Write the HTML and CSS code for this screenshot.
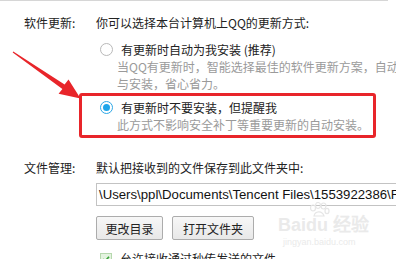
FILE: index.html
```html
<!DOCTYPE html>
<html lang="zh-CN">
<head>
    <meta charset="UTF-8">
    <meta name="viewport" content="width=device-width, initial-scale=1.0">
    <title>更新设置</title>
    <link rel="stylesheet" href="styles.css">
</head>
<body>
    <div class="panel">
        <div class="setting-row">
            <div class="setting-label">软件更新:</div>
            <div class="setting-body">
                <div class="setting-intro">你可以选择本台计算机上QQ的更新方式:</div>

                <div class="option">
                    <div class="option-title">
                        <span class="radio"></span>
                        <span>有更新时自动为我安装 (推荐)</span>
                    </div>
                    <div class="option-desc">当QQ有更新时，智能选择最佳的软件更新方案，自动<br>与安装，省心省力。</div>
                </div>

                <div class="option option-second">
                    <div class="option-title">
                        <span class="radio checked"></span>
                        <span>有更新时不要安装，但提醒我</span>
                    </div>
                    <div class="option-desc">此方式不影响安全补丁等重要更新的自动安装。</div>
                </div>
            </div>
        </div>

        <div class="setting-row files">
            <div class="setting-label">文件管理:</div>
            <div class="setting-body">
                <div class="setting-intro">默认把接收到的文件保存到此文件夹中:</div>
                <div class="path-box">\Users\ppl\Documents\Tencent Files\1553922386\F</div>
                <div class="btn-row">
                    <button class="btn btn-change">更改目录</button>
                    <button class="btn btn-open">打开文件夹</button>
                </div>
                <div class="check-row">
                    <span class="checkbox">
                        <svg width="12" height="12" viewBox="0 0 12 12"><path d="M2.5 6.2 L5 8.6 L9.6 3.2" fill="none" stroke="#3aa23a" stroke-width="2"/></svg>
                    </span>
                    <span>允许接收通过秒传发送的文件</span>
                </div>
            </div>
        </div>
    </div>

    <!-- annotation overlays -->
    <div class="mark-box"></div>
    <svg class="mark-arrow" width="100" height="110" viewBox="0 0 100 110">
        <polygon points="13.3,51.4 64.6,84.4 68.5,79.6 80.5,98.5 58.6,93.8 62.4,89 12.7,52.6" fill="#e8252a"/>
    </svg>
    <div class="watermark">
        <svg class="wm-paw" width="22" height="16" viewBox="0 0 22 16">
            <g fill="none" stroke="#e6e6e6" stroke-width="1.2">
                <ellipse cx="5" cy="6" rx="2.5" ry="3"/>
                <ellipse cx="10" cy="3.5" rx="2.5" ry="3"/>
                <ellipse cx="15.5" cy="4" rx="2.5" ry="3"/>
                <ellipse cx="19" cy="9" rx="2" ry="2.6"/>
                <path d="M6 14 C7 9 14 8 16 14 Z"/>
            </g>
        </svg>
        <div class="wm-logo">Bai<span>du</span> 经验</div>
        <div class="wm-url">jingyan.baidu.com</div>
    </div>
</body>
</html>
```

FILE: styles.css
```css
* {
    margin: 0;
    padding: 0;
    box-sizing: border-box;
}

body {
    font-family: 'Noto Sans CJK SC', 'Noto Sans', sans-serif;
    font-size: 12px;
    line-height: 17px;
    color: #222;
    background: #fff;
    overflow: hidden;
    width: 396px;
    height: 259px;
    position: relative;
}

.panel {
    width: 388px;
    border-top: 1px solid #d6d6d6;
    padding-top: 13px;
}

.setting-row {
    display: flex;
    padding-left: 24px;
}

.setting-label {
    width: 72px;
    flex-shrink: 0;
}

.setting-body {
    flex: 1;
    min-width: 0;
}

.setting-intro {
    white-space: nowrap;
}

.option {
    margin-top: 10px;
}

.option-second {
    margin-top: 7px;
}

.option-title {
    display: flex;
    align-items: center;
    gap: 8px;
    padding-left: 4px;
    white-space: nowrap;
}

.option-desc {
    padding-left: 21px;
    color: #9a9a9a;
    white-space: nowrap;
}

.radio {
    width: 13px;
    height: 13px;
    border: 1px solid #b9b9b9;
    border-radius: 50%;
    background: #fff;
    position: relative;
    flex-shrink: 0;
}

.radio.checked {
    border-color: #2ea7e6;
}

.radio.checked::after {
    content: '';
    position: absolute;
    left: 2px;
    top: 2px;
    width: 7px;
    height: 7px;
    border-radius: 50%;
    background: #1ea5ea;
}

.files {
    margin-top: 26px;
}

.path-box {
    margin-top: 7px;
    width: 310px;
    height: 23px;
    border: 1px solid #c3c3c3;
    border-right: none;
    padding-left: 2px;
    font-family: 'Liberation Sans', Arial, sans-serif;
    font-size: 13.2px;
    line-height: 21px;
    color: #111;
    white-space: nowrap;
    overflow: hidden;
}

.btn-row {
    display: flex;
    gap: 9px;
    margin-top: 10px;
}

.btn {
    height: 24px;
    font-family: 'Noto Sans CJK SC', sans-serif;
    font-size: 12px;
    color: #222;
    background: linear-gradient(#f7f7f7, #e8e8e8);
    border: 1px solid #acacac;
    border-radius: 2px;
}

.btn-change {
    width: 67px;
}

.btn-open {
    width: 82px;
}

.check-row {
    display: flex;
    align-items: center;
    gap: 8px;
    margin-top: 10px;
    padding-left: 4px;
    white-space: nowrap;
}

.checkbox {
    width: 12px;
    height: 12px;
    background: #e4f3e0;
    border: 1px solid #b6d8ae;
    display: flex;
    align-items: center;
    justify-content: center;
}

.checkbox svg {
    display: block;
}

.mark-box {
    position: absolute;
    left: 79px;
    top: 93px;
    width: 297px;
    height: 45px;
    border: 3px solid #e8252a;
    border-radius: 3px;
}

.mark-arrow {
    position: absolute;
    left: 0;
    top: 0;
}

.watermark {
    position: absolute;
    left: 278px;
    top: 207px;
    color: #eaeaea;
    text-align: left;
}

.wm-paw {
    position: absolute;
    left: 30px;
    top: -5px;
}

.wm-logo {
    font-family: 'Liberation Sans', sans-serif;
    font-size: 18px;
    font-weight: 700;
    line-height: 24px;
    padding-top: 6px;
    white-space: nowrap;
}

.wm-url {
    font-family: 'Liberation Sans', sans-serif;
    font-size: 9px;
    line-height: 10px;
    padding-left: 5px;
}
```
